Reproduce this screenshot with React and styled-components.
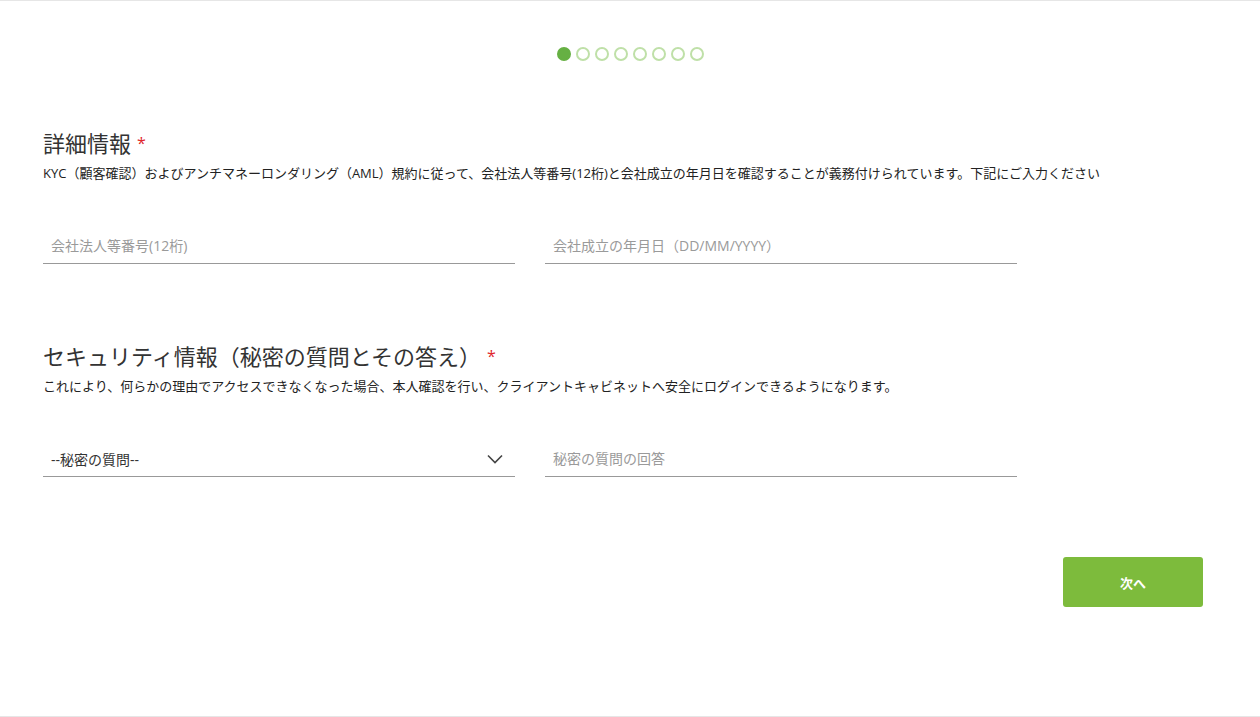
import React from "react";
import styled, { createGlobalStyle } from "styled-components";

const GlobalStyle = createGlobalStyle`
  html, body {
    margin: 0;
    padding: 0;
    background: #fff;
  }
  body {
    font-family: "Open Sans", "Noto Sans CJK JP", sans-serif;
    color: #222;
  }
`;

const Page = styled.div`
  height: 717px;
  box-sizing: border-box;
  border-top: 1px solid #e6e6e6;
  border-bottom: 1px solid #e6e6e6;
  padding: 46px 57px 0 43px;
`;

const Steps = styled.div`
  display: flex;
  justify-content: center;
  gap: 5px;
  padding-left: 14px;
`;

const Dot = styled.span`
  width: 14px;
  height: 14px;
  box-sizing: border-box;
  border-radius: 50%;
  border: 2px solid ${p => (p.active ? "#66b043" : "#bfe0a8")};
  background: ${p => (p.active ? "#66b043" : "#fff")};
`;

const Section = styled.section`
  margin-top: ${p => p.top}px;
`;

const Heading = styled.h2`
  margin: 0;
  font-size: 22px;
  font-weight: 400;
  line-height: 30px;
  color: #333;
`;

const Required = styled.span`
  color: #e0262b;
  font-size: 16px;
  margin-left: 6px;
  vertical-align: 3px;
`;

const Note = styled.p`
  margin: 6px 0 0;
  font-size: 13px;
  line-height: 18px;
  color: #222;
`;

const Fields = styled.div`
  display: grid;
  grid-template-columns: 472px 472px;
  column-gap: 30px;
  margin-top: 46px;
`;

const Field = styled.div`
  display: flex;
  align-items: center;
  justify-content: space-between;
  height: 36px;
  box-sizing: border-box;
  border-bottom: 1px solid #999;
  padding: 0 12px 0 8px;
`;

const Input = styled.input`
  flex: 1;
  border: none;
  outline: none;
  background: transparent;
  font: inherit;
  font-size: 14px;
  color: #333;
  padding: 0;
  &::placeholder {
    color: #9a9a9a;
  }
`;

const SelectText = styled.span`
  font-size: 14px;
  color: #333;
`;

const Actions = styled.div`
  display: flex;
  justify-content: flex-end;
  margin-top: 80px;
`;

const NextButton = styled.button`
  width: 140px;
  height: 50px;
  border: none;
  border-radius: 3px;
  background: #7dbb3c;
  color: #fff;
  font-family: "Open Sans", "Noto Sans CJK JP", sans-serif;
  font-size: 13px;
  font-weight: 700;
  cursor: pointer;
`;

const Chevron = () => (
  <svg width="16" height="10" viewBox="0 0 16 10" fill="none">
    <path d="M1 1.5l7 7 7-7" stroke="#444" strokeWidth="1.6" />
  </svg>
);

export default function App() {
  return (
    <>
      <GlobalStyle />
      <Page>
        <Steps>
          {Array.from({ length: 8 }).map((_, i) => (
            <Dot key={i} active={i === 0} />
          ))}
        </Steps>

        <Section top={67}>
          <Heading>
            詳細情報<Required>*</Required>
          </Heading>
          <Note>
            KYC（顧客確認）およびアンチマネーロンダリング（AML）規約に従って、会社法人等番号(12桁)と会社成立の年月日を確認することが義務付けられています。下記にご入力ください
          </Note>
          <Fields>
            <Field>
              <Input placeholder="会社法人等番号(12桁)" />
            </Field>
            <Field>
              <Input placeholder="会社成立の年月日（DD/MM/YYYY）" />
            </Field>
          </Fields>
        </Section>

        <Section top={77}>
          <Heading>
            セキュリティ情報（秘密の質問とその答え）<Required>*</Required>
          </Heading>
          <Note>
            これにより、何らかの理由でアクセスできなくなった場合、本人確認を行い、クライアントキャビネットへ安全にログインできるようになります。
          </Note>
          <Fields>
            <Field>
              <SelectText>--秘密の質問--</SelectText>
              <Chevron />
            </Field>
            <Field>
              <Input placeholder="秘密の質問の回答" />
            </Field>
          </Fields>
        </Section>

        <Actions>
          <NextButton>次へ</NextButton>
        </Actions>
      </Page>
    </>
  );
}
